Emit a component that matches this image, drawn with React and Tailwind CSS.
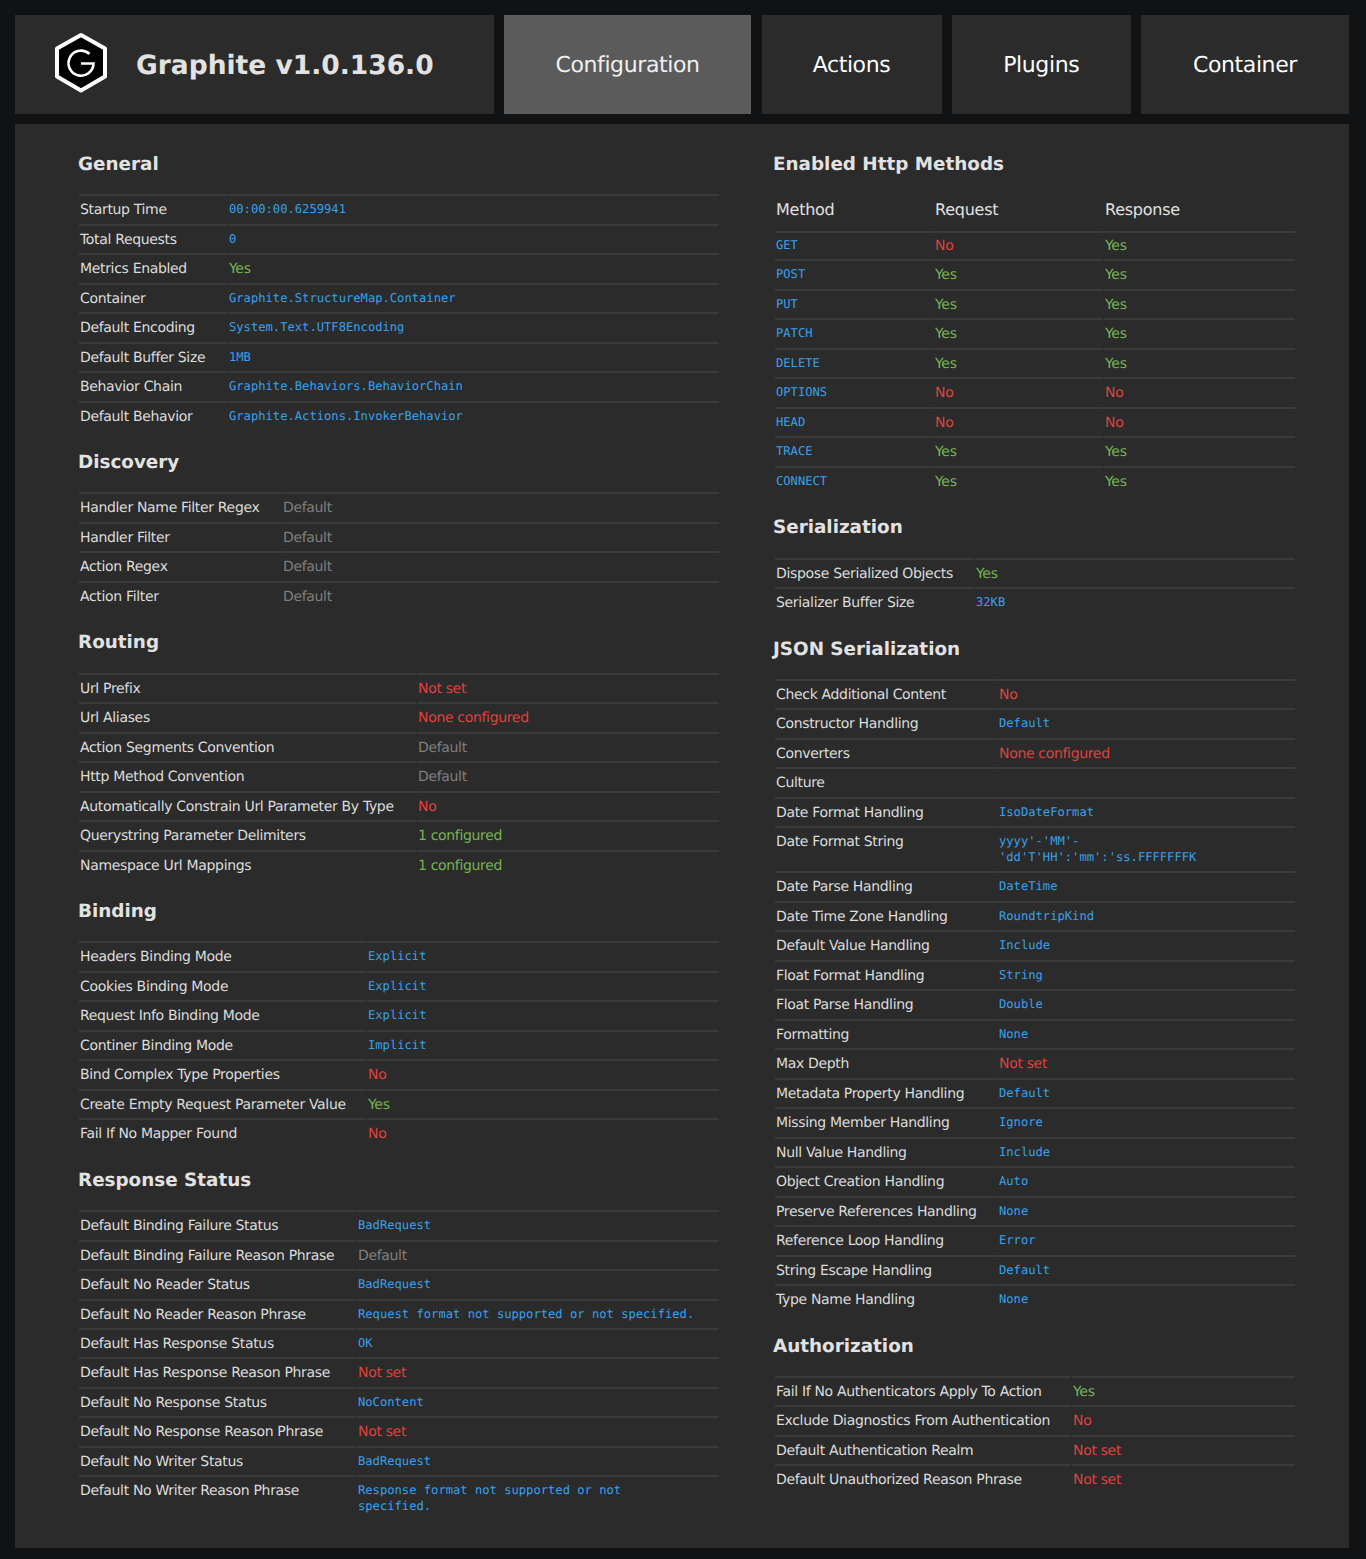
import React from 'react';

const SANS = '"DejaVu Sans", sans-serif';

const NAV = [
    { name: 'Configuration', width: 'w-[247px]' },
    { name: 'Actions', width: 'w-[180px]' },
    { name: 'Plugins', width: 'w-[178.5px]' },
    { name: 'Container', width: 'w-[208px]' },
];

// values: m = code, y = green, n = red, d = grey, t = plain
const LEFT = [
    { title: 'General', col: 147, rows: [
        ['Startup Time', 'm', '00:00:00.6259941'],
        ['Total Requests', 'm', '0'],
        ['Metrics Enabled', 'y', 'Yes'],
        ['Container', 'm', 'Graphite.StructureMap.Container'],
        ['Default Encoding', 'm', 'System.Text.UTF8Encoding'],
        ['Default Buffer Size', 'm', '1MB'],
        ['Behavior Chain', 'm', 'Graphite.Behaviors.BehaviorChain'],
        ['Default Behavior', 'm', 'Graphite.Actions.InvokerBehavior'],
    ] },
    { title: 'Discovery', col: 201, rows: [
        ['Handler Name Filter Regex', 'd', 'Default'],
        ['Handler Filter', 'd', 'Default'],
        ['Action Regex', 'd', 'Default'],
        ['Action Filter', 'd', 'Default'],
    ] },
    { title: 'Routing', col: 336, rows: [
        ['Url Prefix', 'n', 'Not set'],
        ['Url Aliases', 'n', 'None configured'],
        ['Action Segments Convention', 'd', 'Default'],
        ['Http Method Convention', 'd', 'Default'],
        ['Automatically Constrain Url Parameter By Type', 'n', 'No'],
        ['Querystring Parameter Delimiters', 'y', '1 configured'],
        ['Namespace Url Mappings', 'y', '1 configured'],
    ] },
    { title: 'Binding', col: 286, rows: [
        ['Headers Binding Mode', 'm', 'Explicit'],
        ['Cookies Binding Mode', 'm', 'Explicit'],
        ['Request Info Binding Mode', 'm', 'Explicit'],
        ['Continer Binding Mode', 'm', 'Implicit'],
        ['Bind Complex Type Properties', 'n', 'No'],
        ['Create Empty Request Parameter Value', 'y', 'Yes'],
        ['Fail If No Mapper Found', 'n', 'No'],
    ] },
    { title: 'Response Status', col: 276, rows: [
        ['Default Binding Failure Status', 'm', 'BadRequest'],
        ['Default Binding Failure Reason Phrase', 'd', 'Default'],
        ['Default No Reader Status', 'm', 'BadRequest'],
        ['Default No Reader Reason Phrase', 'm', 'Request format not supported or not specified.'],
        ['Default Has Response Status', 'm', 'OK'],
        ['Default Has Response Reason Phrase', 'n', 'Not set'],
        ['Default No Response Status', 'm', 'NoContent'],
        ['Default No Response Reason Phrase', 'n', 'Not set'],
        ['Default No Writer Status', 'm', 'BadRequest'],
        ['Default No Writer Reason Phrase', 'm', 'Response format not supported or not\nspecified.'],
    ] },
];

const METHODS = [
    ['GET', 'No', 'Yes'],
    ['POST', 'Yes', 'Yes'],
    ['PUT', 'Yes', 'Yes'],
    ['PATCH', 'Yes', 'Yes'],
    ['DELETE', 'Yes', 'Yes'],
    ['OPTIONS', 'No', 'No'],
    ['HEAD', 'No', 'No'],
    ['TRACE', 'Yes', 'Yes'],
    ['CONNECT', 'Yes', 'Yes'],
];

const RIGHT = [
    { title: 'Serialization', col: 198, rows: [
        ['Dispose Serialized Objects', 'y', 'Yes'],
        ['Serializer Buffer Size', 'm', '32KB'],
    ] },
    { title: 'JSON Serialization', col: 221, rows: [
        ['Check Additional Content', 'n', 'No'],
        ['Constructor Handling', 'm', 'Default'],
        ['Converters', 'n', 'None configured'],
        ['Culture', 't', ''],
        ['Date Format Handling', 'm', 'IsoDateFormat'],
        ['Date Format String', 'm', "yyyy'-'MM'-\n'dd'T'HH':'mm':'ss.FFFFFFFK"],
        ['Date Parse Handling', 'm', 'DateTime'],
        ['Date Time Zone Handling', 'm', 'RoundtripKind'],
        ['Default Value Handling', 'm', 'Include'],
        ['Float Format Handling', 'm', 'String'],
        ['Float Parse Handling', 'm', 'Double'],
        ['Formatting', 'm', 'None'],
        ['Max Depth', 'n', 'Not set'],
        ['Metadata Property Handling', 'm', 'Default'],
        ['Missing Member Handling', 'm', 'Ignore'],
        ['Null Value Handling', 'm', 'Include'],
        ['Object Creation Handling', 'm', 'Auto'],
        ['Preserve References Handling', 'm', 'None'],
        ['Reference Loop Handling', 'm', 'Error'],
        ['String Escape Handling', 'm', 'Default'],
        ['Type Name Handling', 'm', 'None'],
    ] },
    { title: 'Authorization', col: 295, rows: [
        ['Fail If No Authenticators Apply To Action', 'y', 'Yes'],
        ['Exclude Diagnostics From Authentication', 'n', 'No'],
        ['Default Authentication Realm', 'n', 'Not set'],
        ['Default Unauthorized Reason Phrase', 'n', 'Not set'],
    ] },
];

const KIND = {
    m: 'font-["DejaVu_Sans_Mono",monospace] text-[12.15px] tracking-normal text-[#38a0ea] whitespace-pre-line -translate-y-[1px]',
    y: 'text-[#78b352]',
    n: 'text-[#de423e]',
    d: 'text-[#7f7f7f]',
    t: 'text-[#dcdcdc]',
};

const PAD = 'pt-[7px] pb-[4.9px] pl-[1px] pr-[1px] align-top leading-[15.6px]';
const CELL = `border-t-2 border-[#3a3a3a] ${PAD}`;
const FIRST = 'pt-[6px] pb-[4.9px] pl-[1px] pr-[1px] align-top leading-[15.6px]';

function Value({ kind, children }) {
    return <span className={`block ${KIND[kind]}`}>{children}</span>;
}

function Heading({ children }) {
    return <h2 className="text-[18.35px] leading-[24px] tracking-normal font-bold text-[#e2e2e2] mb-[17.3px]">{children}</h2>;
}

function Section({ title, col, rows, inset }) {
    return (
        <section className="mb-[21px]">
            <Heading>{title}</Heading>
            <div className={inset ? 'ml-[1px]' : ''}>
                <table className="w-full table-fixed border-separate border-spacing-x-[1.6px] border-spacing-y-0">
                    <colgroup>
                        <col style={{ width: col + 1 }} />
                        <col />
                    </colgroup>
                    <tbody>
                        {rows.map(([label, kind, value]) => (
                            <tr key={label}>
                                <td className={`${CELL} text-[#dcdcdc]`}>{label}</td>
                                <td className={CELL}><Value kind={kind}>{value}</Value></td>
                            </tr>
                        ))}
                    </tbody>
                </table>
            </div>
        </section>
    );
}

function YesNo({ value }) {
    return <Value kind={value === 'Yes' ? 'y' : 'n'}>{value}</Value>;
}

function MethodsTable() {
    const TH = 'border-b-2 border-[#3a3a3a] pt-[5px] pb-[9.7px] px-[1px] text-left font-normal text-[16px] tracking-[-0.25px] leading-[22px] text-[#e0e0e0]';
    return (
        <section className="mb-[21px]">
            <Heading>Enabled Http Methods</Heading>
            <div className="ml-[1px]">
                <table className="w-full table-fixed border-separate border-spacing-x-[1.6px] border-spacing-y-0">
                    <colgroup>
                        <col className="w-[158px]" />
                        <col className="w-[169px]" />
                        <col />
                    </colgroup>
                    <thead>
                        <tr>
                            <th className={TH}>Method</th>
                            <th className={TH}>Request</th>
                            <th className={TH}>Response</th>
                        </tr>
                    </thead>
                    <tbody>
                        {METHODS.map(([name, req, res], i) => {
                            const cls = i ? CELL : FIRST;
                            return (
                                <tr key={name}>
                                    <td className={cls}><Value kind="m">{name}</Value></td>
                                    <td className={cls}><YesNo value={req} /></td>
                                    <td className={cls}><YesNo value={res} /></td>
                                </tr>
                            );
                        })}
                    </tbody>
                </table>
            </div>
        </section>
    );
}

function Logo() {
    return (
        <svg width="54" height="62" viewBox="0 0 54 62" className="shrink-0 -mt-[2px]">
            <polygon points="27,3 51,16.5 51,44.5 27,58.5 3,44.5 3,16.5" fill="#000" stroke="#fff" strokeWidth="4" strokeLinejoin="round" />
            <path d="M35.5 22 A 12.5 12.5 0 1 0 39.5 31.5 L 27 31.5" fill="none" stroke="#fff" strokeWidth="2.6" />
        </svg>
    );
}

export default function App() {
    return (
        <div className="min-h-[1559px] bg-[#111214] pt-[15px] pl-[15px] pr-[17px] pb-[11px] text-[14px] tracking-[-0.33px] [text-rendering:geometricPrecision]" style={{ fontFamily: SANS }}>
            <header className="flex gap-[10.5px] h-[98.7px] mb-[10.3px]">
                <div className="flex-1 bg-[#2b2b2b] flex items-center pl-[39px] gap-[28px]">
                    <Logo />
                    <span className="mt-[3px] text-[26.5px] tracking-normal font-bold text-[#e2e2e2]">Graphite v1.0.136.0</span>
                </div>
                {NAV.map((n, i) => (
                    <a key={n.name} className={`flex items-center justify-center pt-[3px] ${n.width} text-[22px] tracking-[-0.4px] ${i === 0 ? 'bg-[#5b5b5b] text-[#f0f0f0]' : 'bg-[#2b2b2b] text-white'}`}>{n.name}</a>
                ))}
            </header>
            <main className="bg-[#2b2b2b] pt-[29px] pb-[6px] pl-[63px] pr-[51px] grid grid-cols-[641.5px_523px] gap-x-[53.5px]">
                <div>
                    {LEFT.map(s => <Section key={s.title} {...s} />)}
                </div>
                <div>
                    <MethodsTable />
                    {RIGHT.map(s => <Section key={s.title} {...s} inset />)}
                </div>
            </main>
        </div>
    );
}
